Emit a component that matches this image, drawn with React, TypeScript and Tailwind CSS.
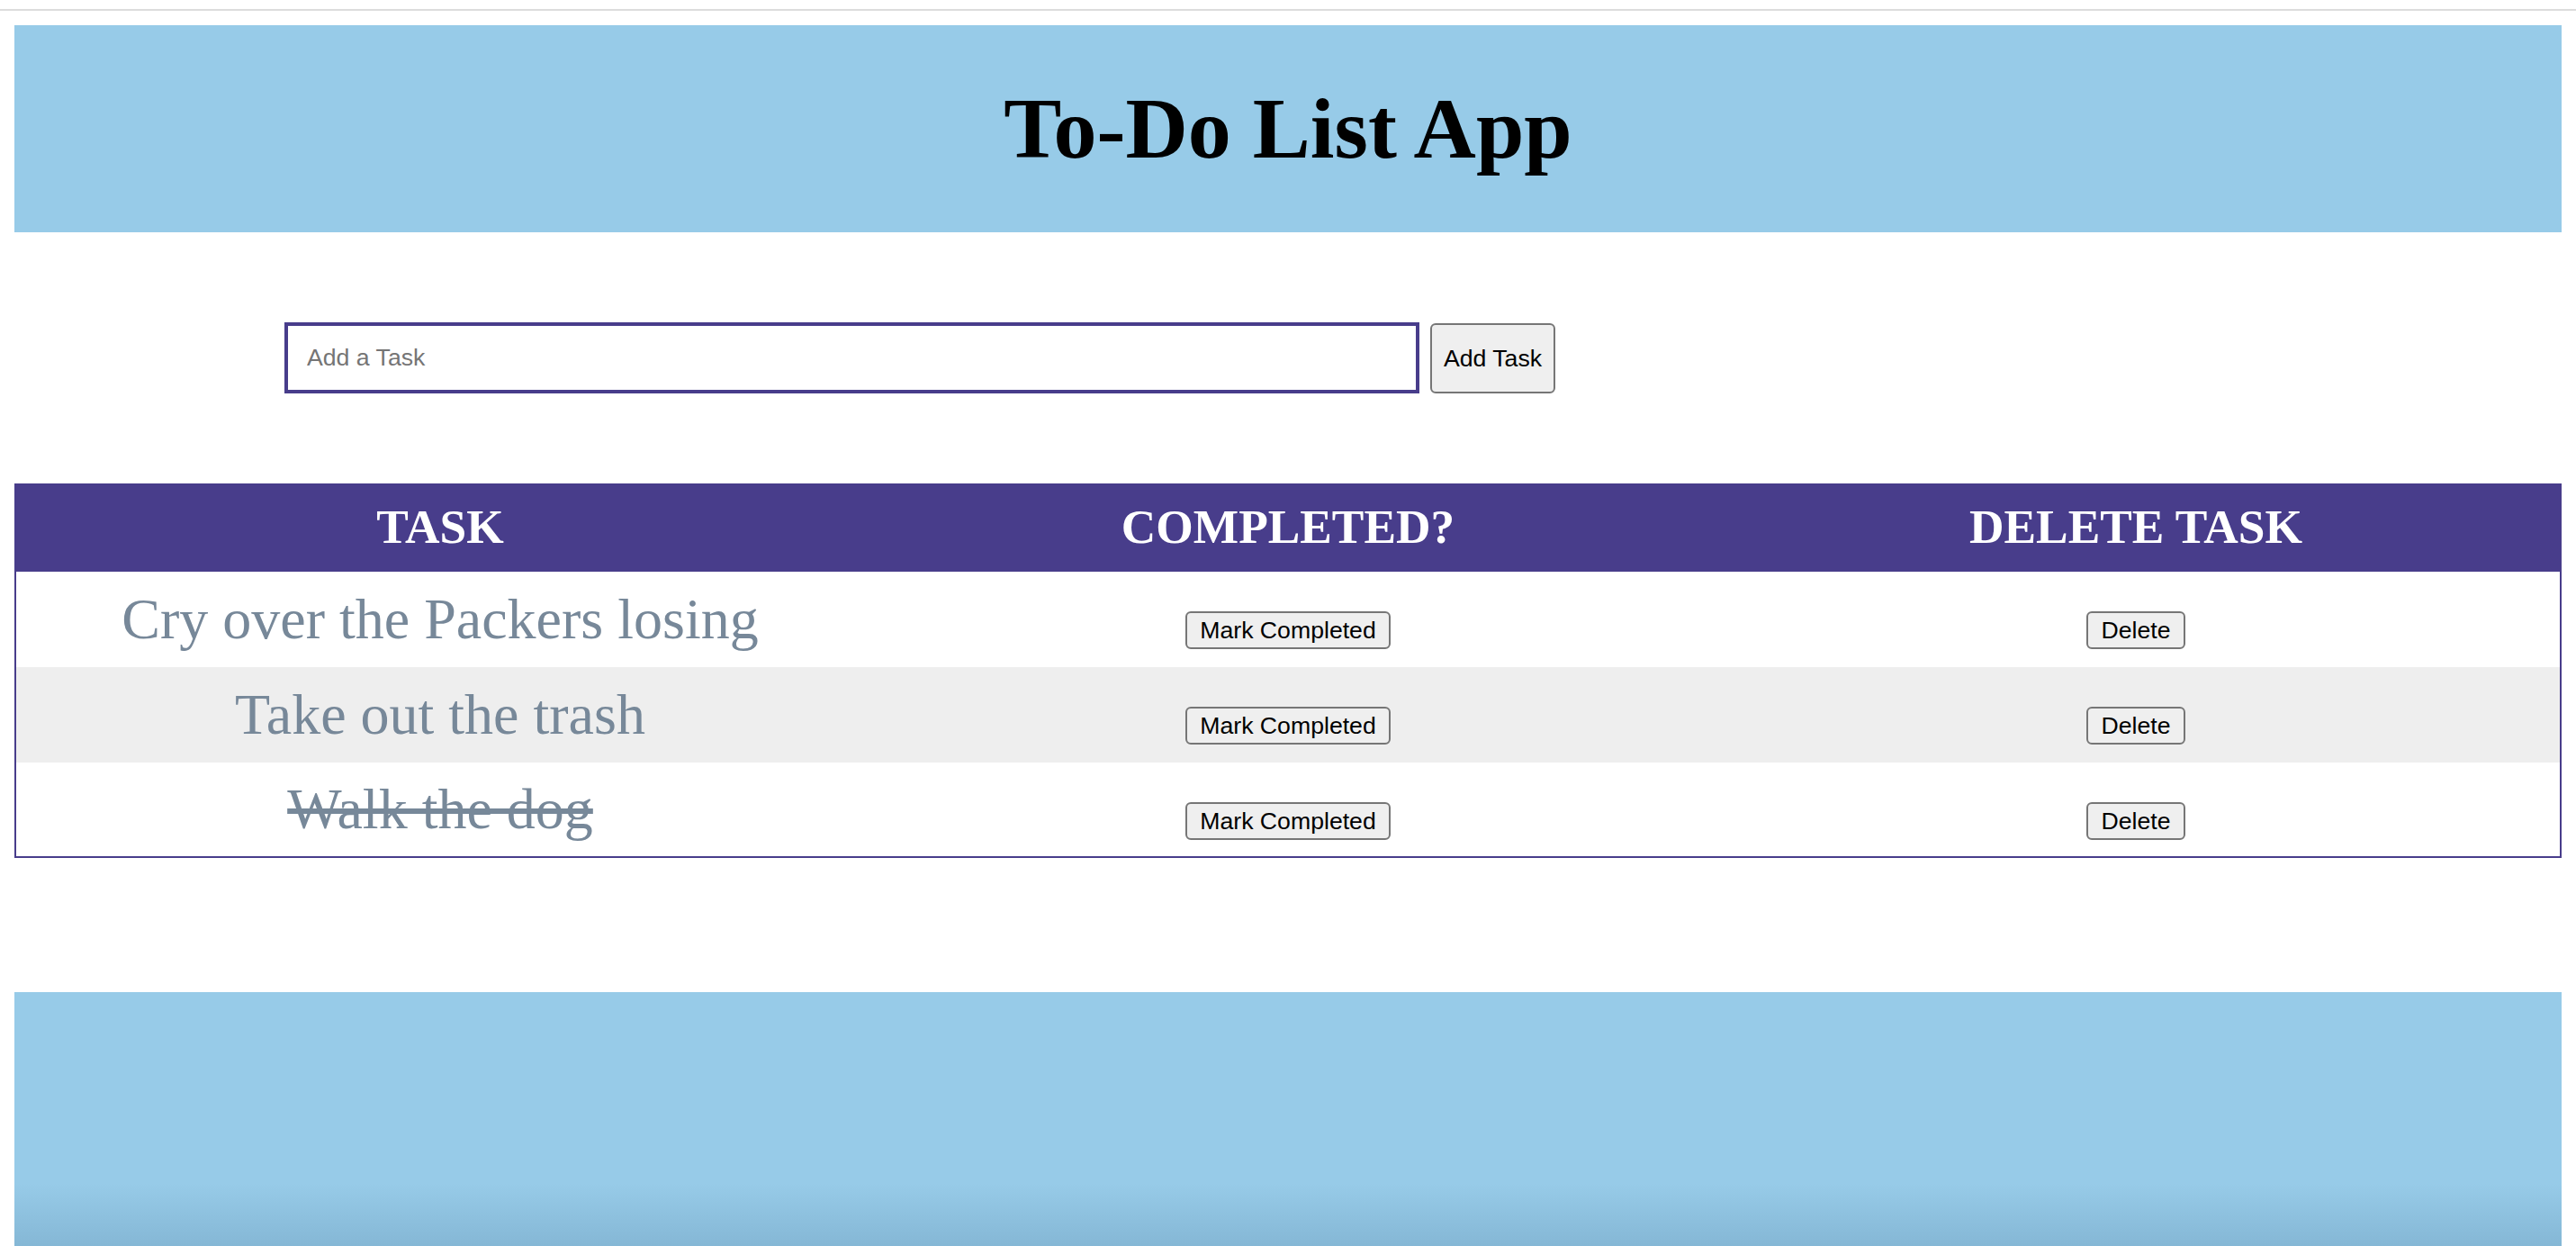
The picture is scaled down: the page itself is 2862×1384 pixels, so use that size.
import React from "react";

const tasks = [
  { text: "Cry over the Packers losing", done: false },
  { text: "Take out the trash", done: false },
  { text: "Walk the dog", done: true },
];

function Btn({ label }: { label: string }) {
  return (
    <button className="h-[42px] px-[14px] border-2 border-[#767676] rounded-[6px] bg-[#efefef] text-black text-[26.67px] leading-none font-['Liberation_Sans',Arial,sans-serif]">
      {label}
    </button>
  );
}

export default function App() {
  return (
    <div className="w-[2862px] h-[1384px] bg-white overflow-hidden flex flex-col">
      <div className="h-[10px] shrink-0" />
      <div className="h-[2px] bg-[#dcdcdc] shrink-0" />
      <div className="h-[16px] shrink-0" />
      <header className="mx-[16px] h-[230px] shrink-0 bg-[#97cbe8] flex items-center justify-center">
        <h1 className="text-[96px] font-bold leading-none text-black font-['Liberation_Serif','Times_New_Roman',serif]">
          To-Do List App
        </h1>
      </header>

      <div className="mt-[100px] ml-[316px] flex items-start gap-[12px] shrink-0">
        <input
          placeholder="Add a Task"
          className="w-[1261px] h-[79px] border-4 border-[#483d8b] bg-white pl-[21px] text-[26.67px] font-['Liberation_Sans',Arial,sans-serif] placeholder:text-[#757575] outline-none"
        />
        <button className="mt-[1px] w-[139px] h-[78px] border-2 border-[#767676] rounded-[6px] bg-[#efefef] text-black text-[26.67px] leading-none font-['Liberation_Sans',Arial,sans-serif]">
          Add Task
        </button>
      </div>

      <div className="mt-[100px] mx-[16px] shrink-0 border-x-2 border-b-2 border-[#483d8b] flex flex-col">
        <div className="h-[98px] bg-[#483d8b] grid grid-cols-3 items-center text-white font-bold uppercase text-[53.33px] leading-none font-['Liberation_Serif','Times_New_Roman',serif]">
          <div className="text-center">Task</div>
          <div className="text-center">Completed?</div>
          <div className="text-center">Delete Task</div>
        </div>
        {tasks.map((t, i) => (
          <div
            key={i}
            className={`grid grid-cols-3 ${i === 2 ? "h-[104px]" : "h-[106px]"} ${i === 1 ? "bg-[#eeeeee]" : "bg-white"}`}
          >
            <div className="flex items-center justify-center">
              <span
                className={`text-[64px] leading-none text-[#778899] font-['Liberation_Serif','Times_New_Roman',serif] ${t.done ? "line-through" : ""}`}
              >
                {t.text}
              </span>
            </div>
            <div className="flex justify-center pt-[44px]">
              <div>
                <Btn label="Mark Completed" />
              </div>
            </div>
            <div className="flex justify-center pt-[44px]">
              <div>
                <Btn label="Delete" />
              </div>
            </div>
          </div>
        ))}
      </div>

      <footer className="mt-[149px] mx-[16px] flex-1 bg-[#97cbe8] relative">
        <div className="absolute bottom-0 left-0 right-0 h-[70px] bg-gradient-to-b from-transparent to-[rgba(0,40,80,0.12)]" />
      </footer>
    </div>
  );
}
